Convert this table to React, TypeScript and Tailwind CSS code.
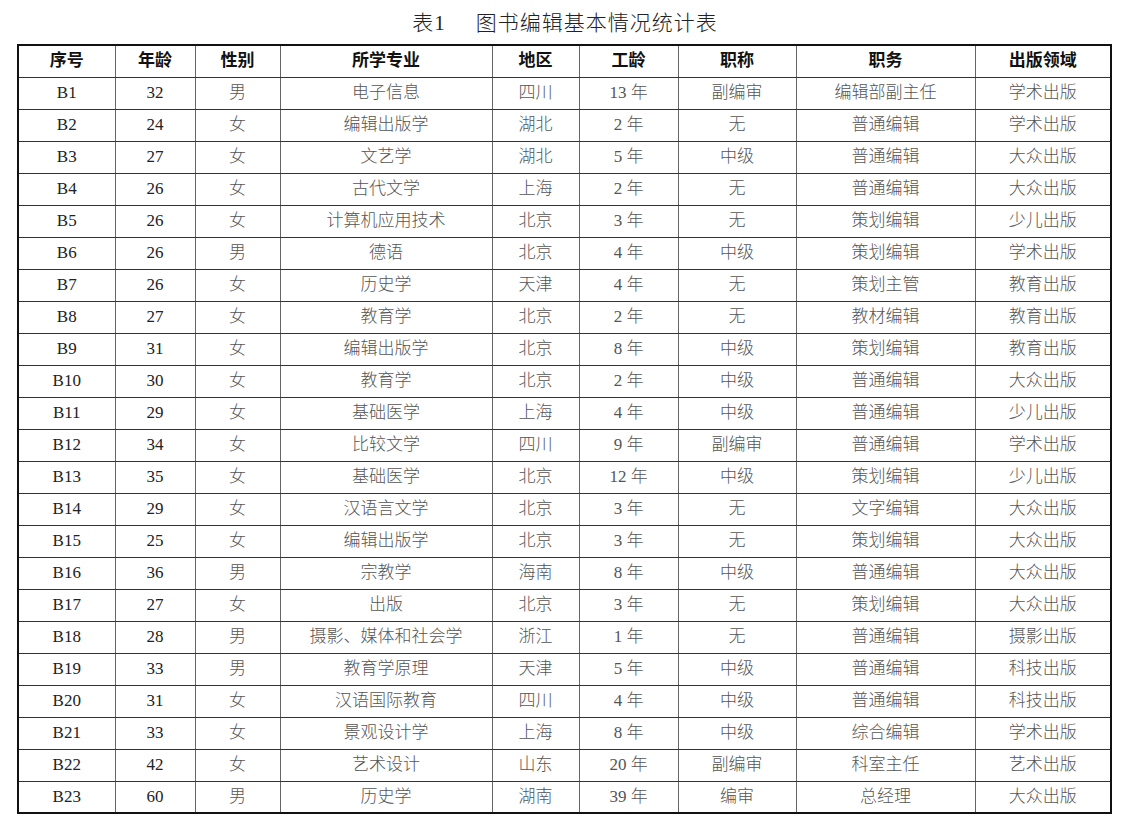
const headers = ["序号", "年龄", "性别", "所学专业", "地区", "工龄", "职称", "职务", "出版领域"];

const widths = ["w-[97px]", "w-[80px]", "w-[85px]", "w-[212px]", "w-[87px]", "w-[99px]", "w-[118px]", "w-[179px]", "w-[136px]"];

const rows: string[][] = [
  ["B1", "32", "男", "电子信息", "四川", "13 年", "副编审", "编辑部副主任", "学术出版"],
  ["B2", "24", "女", "编辑出版学", "湖北", "2 年", "无", "普通编辑", "学术出版"],
  ["B3", "27", "女", "文艺学", "湖北", "5 年", "中级", "普通编辑", "大众出版"],
  ["B4", "26", "女", "古代文学", "上海", "2 年", "无", "普通编辑", "大众出版"],
  ["B5", "26", "女", "计算机应用技术", "北京", "3 年", "无", "策划编辑", "少儿出版"],
  ["B6", "26", "男", "德语", "北京", "4 年", "中级", "策划编辑", "学术出版"],
  ["B7", "26", "女", "历史学", "天津", "4 年", "无", "策划主管", "教育出版"],
  ["B8", "27", "女", "教育学", "北京", "2 年", "无", "教材编辑", "教育出版"],
  ["B9", "31", "女", "编辑出版学", "北京", "8 年", "中级", "策划编辑", "教育出版"],
  ["B10", "30", "女", "教育学", "北京", "2 年", "中级", "普通编辑", "大众出版"],
  ["B11", "29", "女", "基础医学", "上海", "4 年", "中级", "普通编辑", "少儿出版"],
  ["B12", "34", "女", "比较文学", "四川", "9 年", "副编审", "普通编辑", "学术出版"],
  ["B13", "35", "女", "基础医学", "北京", "12 年", "中级", "策划编辑", "少儿出版"],
  ["B14", "29", "女", "汉语言文学", "北京", "3 年", "无", "文字编辑", "大众出版"],
  ["B15", "25", "女", "编辑出版学", "北京", "3 年", "无", "策划编辑", "大众出版"],
  ["B16", "36", "男", "宗教学", "海南", "8 年", "中级", "普通编辑", "大众出版"],
  ["B17", "27", "女", "出版", "北京", "3 年", "无", "策划编辑", "大众出版"],
  ["B18", "28", "男", "摄影、媒体和社会学", "浙江", "1 年", "无", "普通编辑", "摄影出版"],
  ["B19", "33", "男", "教育学原理", "天津", "5 年", "中级", "普通编辑", "科技出版"],
  ["B20", "31", "女", "汉语国际教育", "四川", "4 年", "中级", "普通编辑", "科技出版"],
  ["B21", "33", "女", "景观设计学", "上海", "8 年", "中级", "综合编辑", "学术出版"],
  ["B22", "42", "女", "艺术设计", "山东", "20 年", "副编审", "科室主任", "艺术出版"],
  ["B23", "60", "男", "历史学", "湖南", "39 年", "编审", "总经理", "大众出版"],
];

export default function App() {
  return (
    <div className="w-[1124px] h-[822px] bg-white font-['Liberation_Serif','Noto_Sans_CJK_SC',serif]">
      <h1 className="h-[44px] pt-[9px] text-center text-[21px] leading-[28px] tracking-[1px] font-light text-[#222] pl-[6px]">
        表1<span className="inline-block w-[30px]" />图书编辑基本情况统计表
      </h1>
      <table className="ml-[17px] w-[1093px] table-fixed border-collapse border-2 border-[#111]">
        <colgroup>
          {widths.map((w, i) => (
            <col key={i} className={w} />
          ))}
        </colgroup>
        <thead>
          <tr className="h-[32px]">
            {headers.map((h) => (
              <th
                key={h}
                className="border border-[#333] border-x-[#666] p-0 text-center text-[17px] font-bold text-[#111] leading-[30px]"
              >
                {h}
              </th>
            ))}
          </tr>
        </thead>
        <tbody>
          {rows.map((r) => (
            <tr key={r[0]} className="h-[32px]">
              {r.map((c, i) => (
                <td
                  key={i}
                  className={
                    "border border-[#333] border-x-[#666] p-0 text-center text-[17px] leading-[30px] " +
                    (i < 2 ? "text-[#222]" : "text-[#555] font-light")
                  }
                >
                  {c}
                </td>
              ))}
            </tr>
          ))}
        </tbody>
      </table>
    </div>
  );
}
